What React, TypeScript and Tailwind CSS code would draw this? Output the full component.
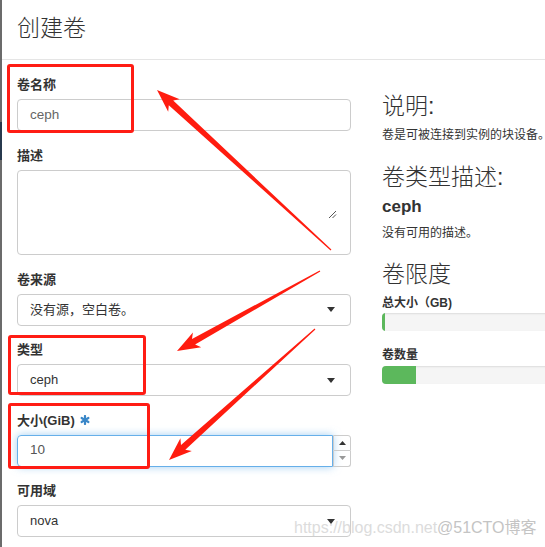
import React from "react";

type P = [number, number];
function arrowPts(t: P, h: P, headLen = 19, headW = 8.5, shaftW = 3.2, tailW = 0.6) {
  const dx = h[0] - t[0];
  const dy = h[1] - t[1];
  const len = Math.hypot(dx, dy);
  const ux = dx / len, uy = dy / len;
  const nx = -uy, ny = ux;
  const bx = h[0] - ux * headLen, by = h[1] - uy * headLen;
  const sb = 4;
  const pts: P[] = [
    [t[0] + nx * tailW, t[1] + ny * tailW],
    [bx + nx * shaftW, by + ny * shaftW],
    [bx - ux * sb + nx * headW, by - uy * sb + ny * headW],
    [h[0], h[1]],
    [bx - ux * sb - nx * headW, by - uy * sb - ny * headW],
    [bx - nx * shaftW, by - ny * shaftW],
    [t[0] - nx * tailW, t[1] - ny * tailW],
  ];
  return pts.map((p) => `${p[0].toFixed(1)},${p[1].toFixed(1)}`).join(" ");
}

const Caret = () => (
  <svg width="8" height="5" viewBox="0 0 8 5" className="shrink-0">
    <path d="M0 0 H8 L4 5 Z" fill="#333" />
  </svg>
);

function Label({ children }: { children: React.ReactNode }) {
  return <div className="h-[17px] leading-[17px] text-[13px] font-bold text-[#333] mb-[6px] flex items-center">{children}</div>;
}

function Select({ value }: { value: string }) {
  return (
    <div className="h-[32px] border border-[#ccc] rounded-[4px] flex items-center justify-between pl-[12px] pr-[15px] text-[13px] text-[#333] bg-white">
      <span>{value}</span>
      <Caret />
    </div>
  );
}

export default function App() {
  return (
    <div
      className="relative w-[545px] h-[547px] overflow-hidden bg-white flex"
      style={{ fontFamily: '"Liberation Sans", "Noto Sans CJK SC", sans-serif' }}
    >
      <div className="w-[2px] shrink-0 flex flex-col">
        <div className="h-[122px] bg-[#6b6b6b]" />
        <div className="h-[38px] bg-[#27394d]" />
        <div className="flex-1 bg-[#6b6b6b]" />
      </div>
      <div className="flex-1 min-w-0 flex flex-col">
        <div className="h-[60px] shrink-0 border-b border-[#e5e5e5] pl-[15px] flex items-center">
          <h1 className="text-[23px] text-[#333] font-light leading-none pb-[2px]">创建卷</h1>
        </div>
        <div className="flex pl-[15px] pt-[16px] gap-[31px]">
          <div className="w-[334px] shrink-0 flex flex-col gap-[15.5px]">
            <div>
              <Label>卷名称</Label>
              <div className="h-[32px] border border-[#ccc] rounded-[4px] flex items-center pl-[12px] text-[13.5px] text-[#666]">ceph</div>
            </div>
            <div>
              <Label>描述</Label>
              <div className="relative h-[85.5px] border border-[#ccc] rounded-[4px]">
                <svg className="absolute left-[310px] top-[39px]" width="9" height="9" viewBox="0 0 9 9">
                  <path d="M1 8 L8 1 M4.5 8 L8 4.5" stroke="#555" strokeWidth="1" />
                </svg>
              </div>
            </div>
            <div>
              <Label>卷来源</Label>
              <Select value="没有源，空白卷。" />
            </div>
            <div>
              <Label>类型</Label>
              <Select value="ceph" />
            </div>
            <div>
              <Label>
                大小(GiB)
                <svg className="ml-[5px]" width="10" height="10" viewBox="0 0 10 10">
                  <g stroke="#3a87c8" strokeWidth="2.2" strokeLinecap="round">
                    <path d="M5 1 V9" />
                    <path d="M1.6 3 L8.4 7" />
                    <path d="M1.6 7 L8.4 3" />
                  </g>
                </svg>
              </Label>
              <div className="flex h-[32px]">
                <div className="flex-1 border border-[#66afe9] rounded-l-[4px] flex items-center pl-[12px] text-[13.5px] text-[#555] shadow-[0_0_8px_rgba(102,175,233,0.6)]">10</div>
                <div className="w-[18px] flex flex-col">
                  <div className="flex-1 border border-[#ccc] rounded-tr-[3px] flex items-center justify-center">
                    <svg width="7" height="4" viewBox="0 0 7 4"><path d="M0 4 H7 L3.5 0 Z" fill="#333" /></svg>
                  </div>
                  <div className="flex-1 border border-t-0 border-[#ccc] rounded-br-[3px] flex items-center justify-center">
                    <svg width="7" height="4" viewBox="0 0 7 4"><path d="M0 0 H7 L3.5 4 Z" fill="#999" /></svg>
                  </div>
                </div>
              </div>
            </div>
            <div>
              <Label>可用域</Label>
              <Select value="nova" />
            </div>
          </div>
          <div className="w-[300px] shrink-0 text-[#333]">
            <h3 className="mt-[18px] text-[23px] leading-[25px] font-light">说明:</h3>
            <p className="mt-[8px] text-[12px] leading-[17px] whitespace-nowrap">卷是可被连接到实例的块设备。</p>
            <h3 className="mt-[21px] text-[23px] leading-[25px] font-light">卷类型描述:</h3>
            <h4 className="mt-[7px] text-[17px] leading-[20px] font-bold">ceph</h4>
            <p className="mt-[8px] text-[12px] leading-[17px]">没有可用的描述。</p>
            <h3 className="mt-[20px] text-[23px] leading-[25px] font-light">卷限度</h3>
            <div className="mt-[8px] text-[12px] leading-[17px] font-bold">总大小（GB)</div>
            <div className="mt-[0.5px] h-[18px] rounded-[4px] bg-[#f5f5f5] shadow-[inset_0_1px_2px_rgba(0,0,0,0.1)] overflow-hidden">
              <div className="h-full w-[3px] bg-[#5cb85c]" />
            </div>
            <div className="mt-[16.5px] text-[12px] leading-[17px] font-bold">卷数量</div>
            <div className="mt-[1.5px] h-[18px] rounded-[4px] bg-[#f5f5f5] shadow-[inset_0_1px_2px_rgba(0,0,0,0.1)] overflow-hidden">
              <div className="h-full w-[34px] bg-[#5cb85c]" />
            </div>
          </div>
        </div>
      </div>

      <div className="absolute left-[7px] top-[64px] w-[127px] h-[69px] border-[3px] border-[#ff1c14] rounded-[3px] pointer-events-none" />
      <div className="absolute left-[8px] top-[335px] w-[138px] h-[60px] border-[3px] border-[#ff1c14] rounded-[3px] pointer-events-none" />
      <div className="absolute left-[8px] top-[403px] w-[142px] h-[66px] border-[3px] border-[#ff1c14] rounded-[3px] pointer-events-none" />

      <svg className="absolute inset-0 pointer-events-none" width="545" height="547" viewBox="0 0 545 547">
        <polygon points={arrowPts([331, 250], [157, 90])} fill="#ff1c0f" />
        <polygon points={arrowPts([320, 271], [177, 351])} fill="#ff1c0f" />
        <polygon points={arrowPts([315, 329], [169, 460])} fill="#ff1c0f" />
      </svg>

      <div className="absolute left-[294px] top-[518px] text-[16px] leading-[20px] text-[#dcdcdc] whitespace-nowrap pointer-events-none">https://blog.csdn.net</div>
      <div className="absolute left-[437px] top-[518px] text-[16px] leading-[20px] text-[#c4c4c4] whitespace-nowrap pointer-events-none">@51CTO博客</div>
    </div>
  );
}
